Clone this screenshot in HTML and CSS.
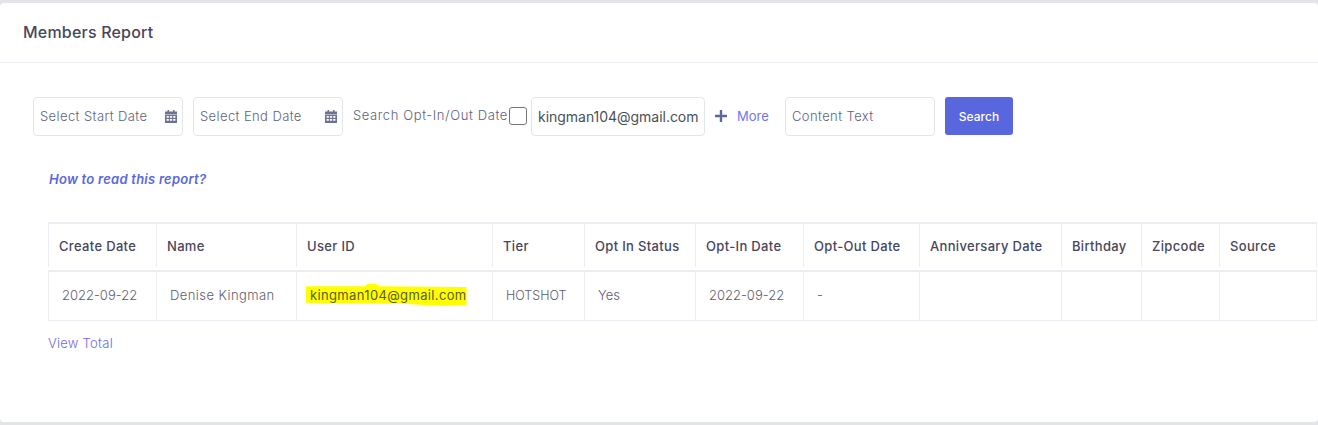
FILE: index.html
```html
<!DOCTYPE html>
<html lang="en">
<head>
<meta charset="utf-8">
<title>Members Report</title>
<link rel="stylesheet" href="styles.css">
</head>
<body>
<main class="card">
  <header class="card-head"><h1>Members Report</h1></header>
  <section class="filters">
    <div class="field date"><span class="ph">Select Start Date</span>
      <svg class="cal" viewBox="0 0 12 13"><path d="M2.5 0h1.5v2H2.5zM8 0h1.5v2H8zM0 1.5h12V4H0z"/><path fill-rule="evenodd" d="M0 4.6h12V13H0zM1.6 6v1.7h2.2V6zM4.9 6v1.7h2.2V6zM8.2 6v1.7h2.2V6zM1.6 9v1.7h2.2V9zM4.9 9v1.7h2.2V9zM8.2 9v1.7h2.2V9z"/></svg>
    </div>
    <div class="field date"><span class="ph">Select End Date</span>
      <svg class="cal" viewBox="0 0 12 13"><path d="M2.5 0h1.5v2H2.5zM8 0h1.5v2H8zM0 1.5h12V4H0z"/><path fill-rule="evenodd" d="M0 4.6h12V13H0zM1.6 6v1.7h2.2V6zM4.9 6v1.7h2.2V6zM8.2 6v1.7h2.2V6zM1.6 9v1.7h2.2V9zM4.9 9v1.7h2.2V9zM8.2 9v1.7h2.2V9z"/></svg>
    </div>
    <span class="opt-label">Search Opt-In/Out Date</span>
    <span class="check"></span>
    <div class="field email"><span class="val">kingman104@gmail.com</span></div>
    <svg class="plus" viewBox="0 0 12 12"><path d="M4.8 0h2.4v4.8H12v2.4H7.2V12H4.8V7.2H0V4.8h4.8z"/></svg>
    <a class="more">More</a>
    <div class="field content"><span class="ph">Content Text</span></div>
    <button class="btn">Search</button>
  </section>
  <p class="howto">How to read this report?</p>
  <div class="table">
    <div class="row head">
      <div class="c c1">Create Date</div><div class="c c2">Name</div><div class="c c3">User ID</div><div class="c c4">Tier</div><div class="c c5">Opt In Status</div><div class="c c6">Opt-In Date</div><div class="c c7">Opt-Out Date</div><div class="c c8">Anniversary Date</div><div class="c c9">Birthday</div><div class="c c10">Zipcode</div><div class="c c11">Source</div>
    </div>
    <div class="row body">
      <div class="c c1">2022-09-22</div><div class="c c2 spaced">Denise Kingman</div><div class="c c3"><span class="mark">kingman104@gmail.com</span></div><div class="c c4 caps">HOTSHOT</div><div class="c c5">Yes</div><div class="c c6">2022-09-22</div><div class="c c7">-</div><div class="c c8"></div><div class="c c9"></div><div class="c c10"></div><div class="c c11"></div>
    </div>
  </div>
  <a class="total">View Total</a>
</main>
</body>
</html>
```
FILE: styles.css
```css
* { box-sizing: border-box; }
html, body { margin: 0; height: 425px; overflow: hidden; }
body {
  background: #e3e4e8;
  padding: 3px 0;
  font-family: Inter, "Noto Sans", sans-serif;
  font-size: 13px;
  font-weight: 300;
  color: #5f5c6e;
}
.card { background: #fff; height: 419px; border-radius: 4px; overflow: hidden; }
.card-head { height: 60px; border-bottom: 1px solid #ebedf2; padding: 19px 23px 0; }
h1 { margin: 0; font-size: 16px; font-weight: 500; letter-spacing: .2px; line-height: 21px; color: #48465b; }
.filters { display: flex; align-items: flex-start; padding: 34px 0 0 33px; height: 107px; }
.field {
  height: 39px; border: 1px solid #e2e5ec; border-radius: 4px;
  display: flex; align-items: center; justify-content: space-between;
  padding: 0 5px 2px 6px; flex: none;
}
.date { width: 150px; margin-right: 10px; }
.ph { color: #5f6379; letter-spacing: .4px; white-space: nowrap; }
.cal { width: 12px; height: 13px; fill: #6c7293; margin-top: 2px; }
.opt-label { width: 154px; line-height: 37px; color: #5f6379; letter-spacing: .6px; white-space: nowrap; flex: none; }
.check { width: 18px; height: 18px; margin: 10px 4px 0 2px; border: 1px solid #767676; border-radius: 3px; background: #fff; flex: none; }
.email { width: 174px; padding-bottom: 1px; }
.val { color: #495057; font-weight: 400; white-space: nowrap; font-size: 14px; letter-spacing: -.03px; }
.plus { width: 12px; height: 12px; fill: #5a6a9a; margin: 13px 10px 0 10px; flex: none; }
.more { width: 48px; line-height: 39px; color: #6f78e6; font-weight: 400; flex: none; }
.content { width: 150px; margin-right: 10px; }
.btn {
  width: 68px; height: 38px; border: 0; border-radius: 3px; background: #5867dd;
  color: #fff; font: 500 12px Inter, "Noto Sans", sans-serif; flex: none;
}
.howto { margin: 0 0 0 49px; height: 51px; font-style: italic; font-weight: 600; letter-spacing: .25px; line-height: 18px; color: #5867dd; }
.table { margin-left: 48px; width: 1269px; margin-top: 1px; border-top: 2px solid #ebedf2; }
.row { display: flex; }
.head { height: 48px; padding-bottom: 3px; border-bottom: 2px solid #ebedf2; color: #48465b; font-weight: 500; letter-spacing: .33px; }
.head .c { padding-bottom: 0; }
.body { height: 49px; border-bottom: 1px solid #ebedf2; }
.c { border-left: 1px solid #ebedf2; display: flex; align-items: center; padding-left: 10px; flex: none; white-space: nowrap; }
.body .c { padding-left: 13px; padding-bottom: 2px; }
.spaced { letter-spacing: .42px; }
.caps { font-size: 12.5px; letter-spacing: 0; }
.c1 { width: 108px; }
.c2 { width: 140px; }
.c3 { width: 196px; }
.c4 { width: 92px; }
.c5 { width: 111px; }
.c6 { width: 108px; }
.c7 { width: 116px; }
.c8 { width: 142px; }
.c9 { width: 80px; }
.c10 { width: 78px; }
.c11 { width: 98px; border-right: 1px solid #ebedf2; }
.body .c3 { padding-left: 9px; }
.mark {
  background: #ffff00; padding: 3px 0 3px 4px; color: #5c5c20; font-weight: 400; letter-spacing: .35px;
  clip-path: polygon(0 10%, 37% 10%, 38% 0, 44% 0, 45% 10%, 100% 14%, 100% 95%, 85% 100%, 60% 90%, 25% 88%, 0 85%);
}
.total { display: block; margin: 13px 0 0 48px; line-height: 18px; letter-spacing: .25px; color: #6f6cdc; }
```
